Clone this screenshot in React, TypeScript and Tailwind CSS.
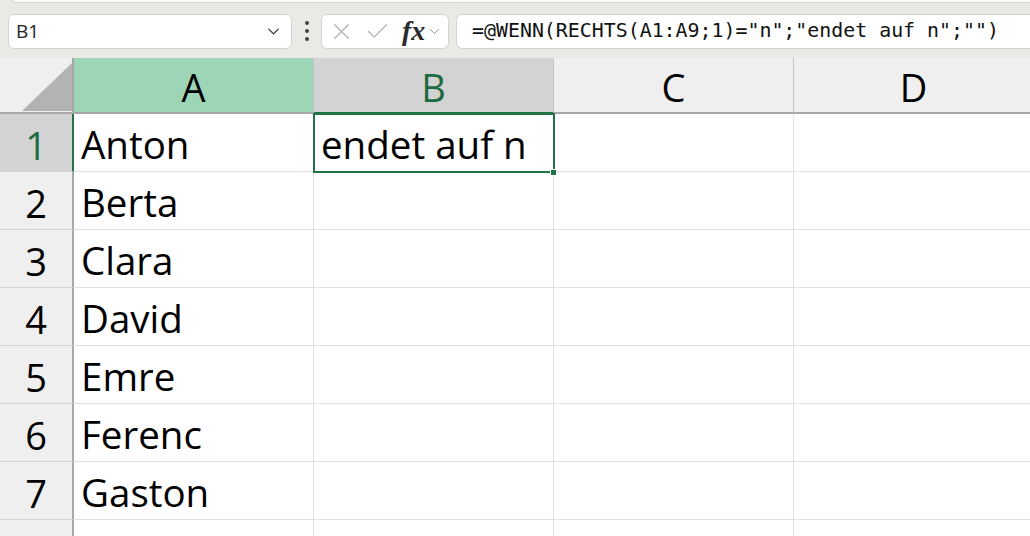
import { ChevronDown, X, Check } from "lucide-react";

const cols = ["A", "B", "C", "D"];
const names = ["Anton", "Berta", "Clara", "David", "Emre", "Ferenc", "Gaston", ""];

const cellFont = { fontFamily: '"Open Sans", "Noto Sans", sans-serif' };

function FormulaBar() {
  return (
    <div className="relative h-[58px] bg-[#e9e9e5]">
      <div className="absolute left-[12px] right-0 top-0 h-[3px] rounded-bl-[6px] border-b border-l border-[#d6d6d2] bg-[#fafafa]" />
      <div className="flex h-full items-center pt-[4px]">
        <div className="ml-[8px] flex h-[35px] w-[284px] items-center justify-between rounded-[6px] border border-[#d3d3d0] bg-white pl-[7px] pr-[8px]">
          <span className="text-[19px] text-[#222]" style={{ fontFamily: '"Open Sans", sans-serif' }}>
            B1
          </span>
          <ChevronDown size={19} strokeWidth={1.6} className="text-[#333]" />
        </div>
        <div className="ml-[13px] mr-[12px] flex flex-col gap-[4px]">
          <span className="h-[4px] w-[4px] rounded-full bg-[#444]" />
          <span className="h-[4px] w-[4px] rounded-full bg-[#444]" />
          <span className="h-[4px] w-[4px] rounded-full bg-[#444]" />
        </div>
        <div className="flex h-[35px] w-[128px] items-center rounded-[6px] border border-[#d3d3d0] bg-white pl-[6px]">
          <X size={27} strokeWidth={1.2} className="text-[#b4b4b4]" />
          <Check size={27} strokeWidth={1.2} className="ml-[9px] text-[#b4b4b4]" />
          <span
            className="ml-[11px] text-[28px] font-semibold italic leading-none text-[#2a2a2a]"
            style={{ fontFamily: '"Liberation Serif", "DejaVu Serif", serif' }}
          >
            fx
          </span>
          <ChevronDown size={17} strokeWidth={1.4} className="ml-[1px] text-[#999]" />
        </div>
        <div className="ml-[7px] flex h-[35px] flex-1 items-center rounded-l-[6px] border border-r-0 border-[#d3d3d0] bg-white pl-[15px]">
          <span
            className="whitespace-pre text-[19.9px] text-[#111]"
            style={{ fontFamily: '"DejaVu Sans Mono", "Liberation Mono", monospace' }}
          >
            =@WENN(RECHTS(A1:A9;1)="n";"endet auf n";"")
          </span>
        </div>
      </div>
    </div>
  );
}

function HeaderRow() {
  return (
    <div className="flex h-[56px]">
      <div className="relative h-full w-[74px] shrink-0 border-r-2 border-b-2 border-[#a8a8a8] bg-[#efefef]">
        <svg className="absolute left-[20px] top-[5px]" width="52" height="48" viewBox="0 0 52 48">
          <polygon points="52,0 52,48 2,48" fill="#b3b3b3" />
        </svg>
      </div>
      {cols.map((c) => {
        const bg = c === "A" ? "bg-[#9fd5b7]" : c === "B" ? "bg-[#d3d3d3]" : "bg-[#efefef]";
        const txt = c === "B" ? "text-[#1e6b41]" : "text-black";
        const border = c === "B" ? "border-b-[#217346]" : "border-b-[#a8a8a8]";
        return (
          <div
            key={c}
            className={`flex h-full w-[240px] shrink-0 items-center justify-center border-r border-r-[#c4c4c4] border-b-2 ${border} ${bg}`}
          >
            <span className={`pt-[4px] text-[38px] leading-none ${txt}`} style={cellFont}>
              {c}
            </span>
          </div>
        );
      })}
    </div>
  );
}

function Row({ n, name }: { n: number; name: string }) {
  const sel = n === 1;
  const last = n === 8;
  return (
    <div className="flex h-[58px]">
      <div
        className={`flex h-full w-[74px] shrink-0 items-center justify-center border-b border-b-[#d4d4d4] border-r-2 ${
          sel ? "border-r-[#217346] bg-[#d3d3d3]" : "border-r-[#a8a8a8] bg-[#efefef]"
        }`}
      >
        {!last && (
          <span className={`pt-[4px] text-[38px] leading-none ${sel ? "text-[#1e6b41]" : "text-black"}`} style={cellFont}>
            {n}
          </span>
        )}
      </div>
      {cols.map((c) => (
        <div
          key={c}
          className="flex h-full w-[240px] shrink-0 items-center border-r border-b border-[#e1e1e1] bg-white pl-[7px]"
        >
          <span className="pt-[4px] text-[38.5px] leading-none text-black" style={cellFont}>
            {c === "A" ? name : c === "B" && n === 1 ? "endet auf n" : ""}
          </span>
        </div>
      ))}
    </div>
  );
}

export default function App() {
  return (
    <div className="relative h-[536px] w-[1030px] overflow-hidden bg-white">
      <FormulaBar />
      <div className="relative">
        <HeaderRow />
        {names.map((name, i) => (
          <Row key={i} n={i + 1} name={name} />
        ))}
        <div className="absolute left-[313px] top-[55px] h-[60px] w-[242px] border-2 border-[#217346]" />
        <div className="absolute left-[550px] top-[111px] h-[7px] w-[7px] border border-white bg-[#217346]" />
      </div>
    </div>
  );
}
